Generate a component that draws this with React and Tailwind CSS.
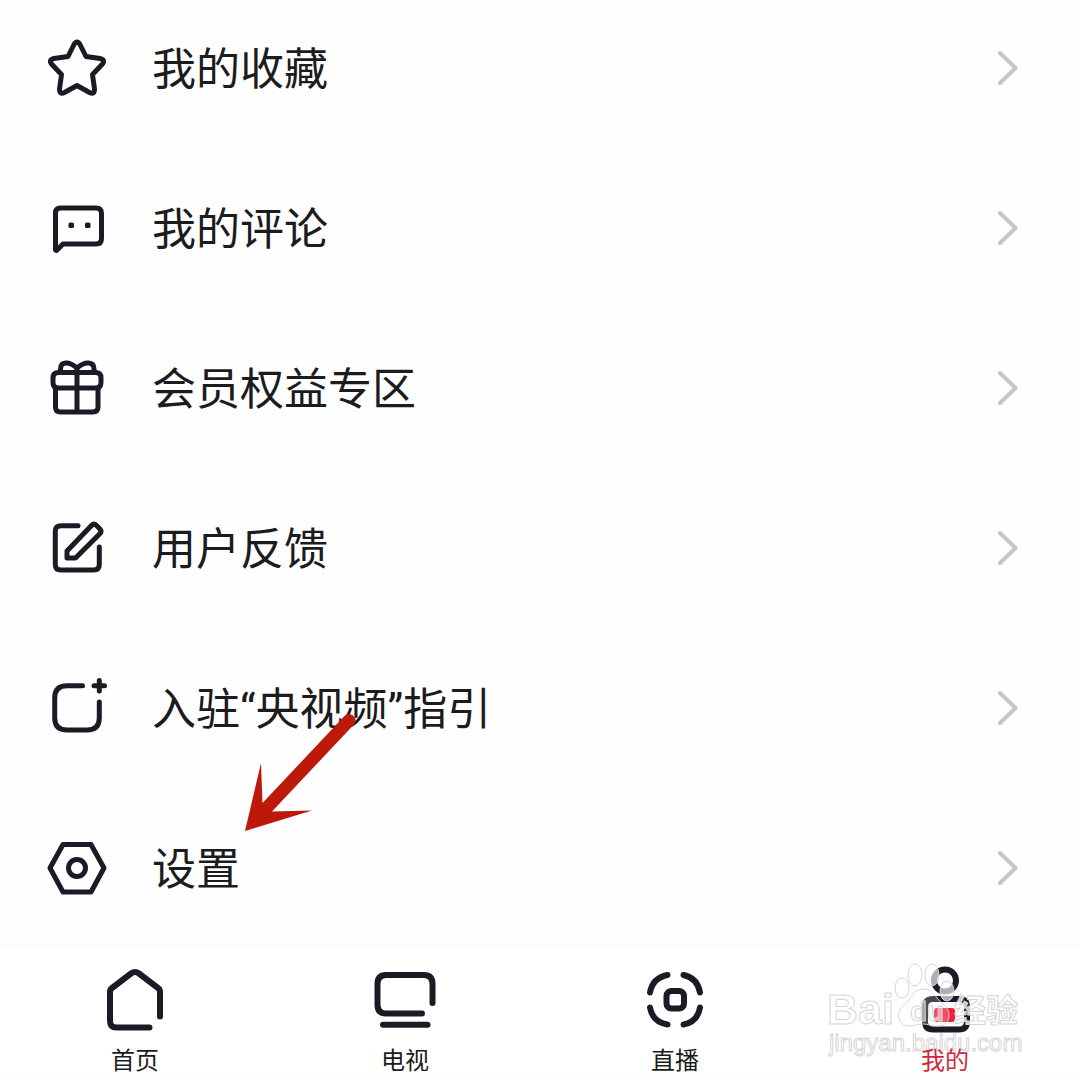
import React from "react";

const stroke = {
  fill: "none",
  stroke: "#1b1b25",
  strokeLinecap: "round",
  strokeLinejoin: "round",
};

function Icon({ width = 5, children }) {
  return (
    <svg className="size-16 shrink-0 overflow-visible" viewBox="0 0 64 64" strokeWidth={width} aria-hidden="true" {...stroke}>
      {children}
    </svg>
  );
}

const StarIcon = () => (
  <Icon>
    <path d="M29 8.500Q32 3.500 35 8.500L41 20.500L55 22.500Q61 24 57 28.500L47.500 38.500L49.500 53Q49.500 59 44.500 56.500L32 49.500L19.500 56.500Q14.500 59 14.500 53L16.500 38.500L7 28.500Q3 24 9 22.500L23 20.500Z" />
  </Icon>
);

const CommentIcon = () => (
  <Icon>
    <path d="M10.500 54V17Q10.500 12 15.500 12H51Q56.500 12 56.500 17.500V42.500Q56.500 48 51 48H18L11.500 54.500Z" />
    <g fill="#1b1b25" stroke="none">
      <rect x="23.500" y="26.500" width="5.500" height="5.500" rx="1.500" />
      <rect x="40" y="26.500" width="5.500" height="5.500" rx="1.500" />
    </g>
  </Icon>
);

const GiftIcon = () => (
  <Icon>
    <path d="M13.500 16.500H50.500Q56 16.500 56 22V26.500Q56 32 50.500 32H13.500Q8 32 8 26.500V22Q8 16.500 13.500 16.500Z" />
    <path d="M10.500 32V51Q10.500 56 15.500 56H47.500Q53 56 53 51V32M32 13V56M15.500 16V13C15.500 5.500 24 5 32 12C40 5 49 5.500 49 13V16" />
  </Icon>
);

const EditIcon = () => (
  <Icon>
    <path d="M33 9.700H16Q10.300 9.700 10.300 15.500V48.500Q10.300 54 16 54H48.500Q54.300 54 54.300 48.500V31" />
    <path d="M22 35L46.500 9.500Q49 7 51.500 9.500L55 13Q57 15.500 54.800 17.800L30.500 42H22Z" />
  </Icon>
);

const JoinIcon = () => (
  <Icon>
    <path d="M37.500 9.700H22Q9.700 9.700 9.700 22V42Q9.700 54 22 54H42Q54.300 54 54.300 42V26M54.300 4.500V15M49 9.700H59.500" />
  </Icon>
);

const SettingsIcon = () => (
  <Icon>
    <path d="M5 32L18 8.500H46L59 32L46 56H18Z" />
    <circle cx="32" cy="32" r="8.500" />
  </Icon>
);

const HomeIcon = () => (
  <Icon width={6}>
    <path d="M57 48.500V24Q57 21.500 55 20L36 5.500Q32 2.500 28 5.500L9 20Q7 21.500 7 24V53Q7 59.500 13.500 59.500H46.500" />
  </Icon>
);

const TvIcon = () => (
  <Icon width={6}>
    <path d="M59.500 35V16Q59.500 7 51 7H13Q4.500 7 4.500 16V36.500Q4.500 45.500 13 45.500H49M10 56.700H54.500" />
  </Icon>
);

const LiveIcon = () => (
  <Icon width={6}>
    <path d="M24.500 7Q9.500 10 7 24.500M40.500 7Q54.500 10 57 24.500M24.500 56.500Q9.500 54 7 39.500M40.500 56.500Q54.500 54 57 39.500" />
    <rect x="23.500" y="23" width="17.500" height="17.500" rx="5" />
  </Icon>
);

const MineIcon = () => (
  <Icon width={6}>
    <circle cx="32" cy="12.500" r="11" />
    <path d="M20 31H46Q54 31 54 39V53.500Q54 61.500 46 61.500H20Q12 61.500 12 53.500V39Q12 31 20 31Z" />
    <rect x="21" y="40" width="21" height="14" rx="3" fill="#f0203c" stroke="none" />
  </Icon>
);

const rows = [
  { label: "我的收藏", Glyph: StarIcon },
  { label: "我的评论", Glyph: CommentIcon },
  { label: "会员权益专区", Glyph: GiftIcon },
  { label: "用户反馈", Glyph: EditIcon },
  { label: "入驻“央视频”指引", Glyph: JoinIcon },
  { label: "设置", Glyph: SettingsIcon },
];

const tabs = [
  { label: "首页", Glyph: HomeIcon },
  { label: "电视", Glyph: TvIcon },
  { label: "直播", Glyph: LiveIcon },
  { label: "我的", Glyph: MineIcon, active: true },
];

function Chevron() {
  return (
    <svg className="ml-auto h-10 w-6 shrink-0" viewBox="0 0 24 40" fill="none" stroke="#c6c6ca" strokeWidth="4" strokeLinecap="round" strokeLinejoin="round" aria-hidden="true">
      <path d="M4 5L19.500 20L4 35" />
    </svg>
  );
}

function Arrow() {
  return (
    <svg className="pointer-events-none absolute top-[708px] left-[240px] h-[128px] w-[128px]" viewBox="240 708 128 128" aria-hidden="true">
      <path fill="#bd190b" d="M245 831L261 763L262.500 803L344 716.500Q348 712 353 715.500Q358 720 353.500 725L272 811.500L312 810.500Z" />
    </svg>
  );
}

function Watermark() {
  return (
    <svg
      className="pointer-events-none absolute top-[10px] right-[54px] h-[112px] w-[202px]"
      viewBox="824 956 202 112"
      fill="#ffffff"
      stroke="#d6d6d6"
      strokeWidth="1"
      fontFamily='"Liberation Sans", "Noto Sans CJK SC", sans-serif'
      aria-hidden="true"
    >
      <g fillOpacity="0.65">
        <ellipse cx="902" cy="988" rx="7" ry="10" />
        <ellipse cx="915" cy="975" rx="7" ry="11" />
        <ellipse cx="932" cy="975" rx="7" ry="11" />
        <ellipse cx="947" cy="991" rx="7" ry="10" />
      </g>
      <path fillOpacity="0.2" d="M923 989C913 989 912 998 905 1004C894 1012 898 1026 909 1026C916 1026 918 1024 923 1024C928 1024 931 1026 938 1026C950 1026 953 1012 943 1004C935 998 934 989 923 989Z" />
      <g fontWeight="700">
        <text x="827" y="1024" fontSize="43">Bai</text>
        <text x="910" y="1021" fontSize="28" fillOpacity="0.5">du</text>
        <text x="954" y="1022" fontSize="32" fillOpacity="0.8">经验</text>
      </g>
      <text x="829" y="1051" fontSize="24">jingyan.baidu.com</text>
    </svg>
  );
}

export default function App() {
  return (
    <div className="relative min-h-screen bg-[#fefefe] font-[Roboto,'Noto_Sans_CJK_SC',sans-serif] text-[#1b1b20]" lang="zh-CN">
      <main className="relative pt-9 pb-11">
        <ul className="flex flex-col gap-24">
          {rows.map(({ label, Glyph }) => (
            <li key={label}>
              <button type="button" className="flex h-16 w-full items-center pr-[60px] pl-[45px] text-left">
                <Glyph />
                <span className="ml-[43px] pt-1 text-[44px] leading-[60px]">{label}</span>
                <Chevron />
              </button>
            </li>
          ))}
        </ul>
        <Arrow />
      </main>
      <nav className="relative border-t-2 border-[#fafafa] bg-white">
        <Watermark />
        <ul className="grid grid-cols-4">
          {tabs.map(({ label, Glyph, active }) => (
            <li key={label}>
              <a
                href="#"
                aria-current={active ? "page" : undefined}
                className={`flex flex-col items-center pt-[22px] ${active ? "text-[#d02840]" : ""}`}
              >
                <Glyph />
                <span className="relative z-10 mt-[13px] text-2xl leading-8">{label}</span>
              </a>
            </li>
          ))}
        </ul>
      </nav>
    </div>
  );
}
